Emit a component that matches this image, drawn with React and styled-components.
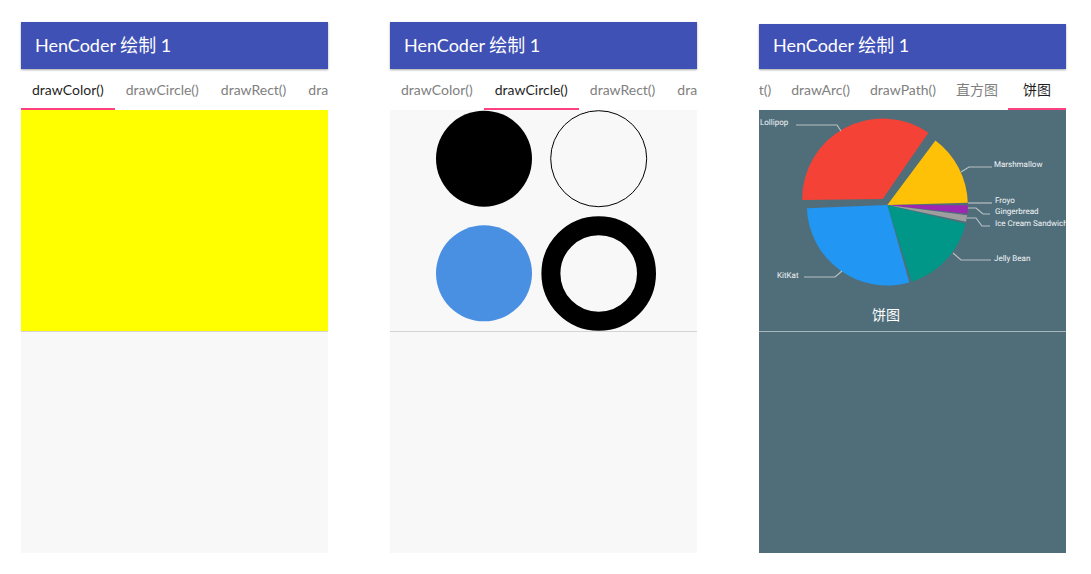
import React from 'react';
import styled, { createGlobalStyle } from 'styled-components';

const GlobalStyle = createGlobalStyle`
  * { box-sizing: border-box; }
  body {
    margin: 0;
    background: #fff;
    font-family: Lato, "Noto Sans CJK SC", sans-serif;
  }
`;

const Page = styled.main`
  display: grid;
  grid-template-columns: repeat(3, minmax(0, 1fr));
  gap: 62px;
  min-height: 100vh;
  padding: 22px 25px 21px 21px;
`;

const Phone = styled.section`
  display: flex;
  flex-direction: column;
  min-width: 0;
  padding-top: ${(p) => (p.$short ? 2 : 0)}px;
`;

const AppBar = styled.header`
  display: flex;
  align-items: center;
  height: ${(p) => (p.$short ? 45 : 47)}px;
  padding: 0 14px ${(p) => (p.$short ? 4 : 2)}px;
  background: #3f51b5;
  box-shadow: 0 1px 2px rgba(0, 0, 0, 0.35);
  z-index: 1;
`;

const Title = styled.h1`
  margin: 0;
  color: #fff;
  font-size: 18px;
  font-weight: 400;
  line-height: 24px;
  white-space: nowrap;
`;

const TabStrip = styled.div`
  display: flex;
  justify-content: ${(p) => (p.$scrolled ? 'flex-end' : 'flex-start')};
  height: 41px;
  overflow: hidden;
  background: #fff;
`;

const Tab = styled.button`
  flex: none;
  min-width: 58px;
  padding: 2px ${(p) => (p.$tight ? 10 : 11)}px 0;
  border: 0;
  border-bottom: 2px solid ${(p) => (p.$active ? '#ff4081' : 'transparent')};
  background: none;
  color: ${(p) => (p.$active ? '#1f1f1f' : '#808080')};
  font: inherit;
  font-size: 14px;
  line-height: 20px;
  white-space: nowrap;
  cursor: pointer;
`;

const Pane = styled.div`
  aspect-ratio: 307 / 221;
  overflow: hidden;
  background: ${(p) => p.$color};
`;

const LowerPane = styled.div`
  flex: 1;
  border-top: 1px solid ${(p) => p.$line};
  background: ${(p) => p.$color};
`;

const Drawing = styled.svg`
  display: block;
  width: 100%;
  height: 100%;
`;

const Label = styled.text`
  fill: #f2f5f6;
  font-family: Roboto, sans-serif;
  font-size: 8px;
  text-rendering: geometricPrecision;
`;

const Caption = styled.text`
  fill: #fff;
  font-family: "Noto Sans CJK SC", sans-serif;
  font-size: 14px;
  text-anchor: middle;
`;

const RADIUS = 80.5;
const SLICES = [
  { color: '#f44336', from: 179.3, to: 304.6, cx: 123.7, cy: 89 },
  { color: '#ffc107', from: 306.7, to: 358.4 },
  { color: '#9c27b0', from: 0.2, to: 6.2 },
  { color: '#9e9e9e', from: 7.3, to: 12 },
  { color: '#009688', from: 13.5, to: 72.4 },
  { color: '#2196f3', from: 74.1, to: 177.6 },
];

const LABELS = [
  { text: 'Lollipop', x: 1, y: 15, line: '37,15 78,15 82,21' },
  { text: 'Marshmallow', x: 235, y: 57, line: '202,62 210,57 233,57' },
  { text: 'Froyo', x: 236, y: 93, line: '209,93 233,93' },
  { text: 'Gingerbread', x: 236, y: 104, line: '209,98 217,98 224,104 231,104' },
  { text: 'Ice Cream Sandwich', x: 236, y: 116, line: '208,108 217,108 223,116 231,116' },
  { text: 'Jelly Bean', x: 235, y: 151, line: '194,143 202,150 232,150' },
  { text: 'KitKat', x: 18, y: 168, line: '45,167 76,167 83,161' },
];

function slicePath({ from, to, cx = 128.3, cy = 95 }) {
  const at = (deg) => {
    const a = (deg * Math.PI) / 180;
    return `${(cx + RADIUS * Math.cos(a)).toFixed(2)} ${(cy + RADIUS * Math.sin(a)).toFixed(2)}`;
  };
  return `M${cx} ${cy}L${at(from)}A${RADIUS} ${RADIUS} 0 0 1 ${at(to)}Z`;
}

function Circles() {
  return (
    <Drawing viewBox="0 0 307 221" role="img" aria-label="drawCircle()">
      <circle cx="94" cy="48.7" r="48" />
      <circle cx="208.7" cy="48.7" r="48" fill="none" stroke="#000" />
      <circle cx="94" cy="163.3" r="48" fill="#4a90e2" />
      <circle cx="208.7" cy="163.5" r="47.8" fill="none" stroke="#000" strokeWidth="19" />
    </Drawing>
  );
}

function PieChart() {
  return (
    <Drawing viewBox="0 0 307 221" role="img" aria-label="饼图">
      {SLICES.map((s) => (
        <path key={s.color} d={slicePath(s)} fill={s.color} />
      ))}
      {LABELS.map((l) => (
        <g key={l.text}>
          <polyline points={l.line} fill="none" stroke="#b9c0c2" strokeWidth="1.2" />
          <Label x={l.x} y={l.y}>{l.text}</Label>
        </g>
      ))}
      <Caption x="127" y="210">饼图</Caption>
    </Drawing>
  );
}

const FIRST_TABS = ['drawColor()', 'drawCircle()', 'drawRect()', 'drawPoint()'];
const LAST_TABS = ['drawRoundRect()', 'drawArc()', 'drawPath()', '直方图', '饼图'];

function Screen({ tabs, active, scrolled, short, color, lower = '#f8f8f8', line = '#d4d4d4', children }) {
  return (
    <Phone $short={short}>
      <AppBar $short={short}>
        <Title>HenCoder 绘制 1</Title>
      </AppBar>
      <TabStrip role="tablist" $scrolled={scrolled}>
        {tabs.map((t) => (
          <Tab
            key={t}
            type="button"
            role="tab"
            aria-selected={t === active}
            $active={t === active}
            $tight={scrolled}
          >
            {t}
          </Tab>
        ))}
      </TabStrip>
      <Pane $color={color}>{children}</Pane>
      <LowerPane $color={lower} $line={line} />
    </Phone>
  );
}

export default function App() {
  return (
    <>
      <GlobalStyle />
      <Page>
        <Screen tabs={FIRST_TABS} active="drawColor()" color="#ffff00" />
        <Screen tabs={FIRST_TABS} active="drawCircle()" color="#f8f8f8">
          <Circles />
        </Screen>
        <Screen
          tabs={LAST_TABS}
          active="饼图"
          scrolled
          short
          color="#506e7a"
          lower="#506e7a"
          line="#a9b7bc"
        >
          <PieChart />
        </Screen>
      </Page>
    </>
  );
}
